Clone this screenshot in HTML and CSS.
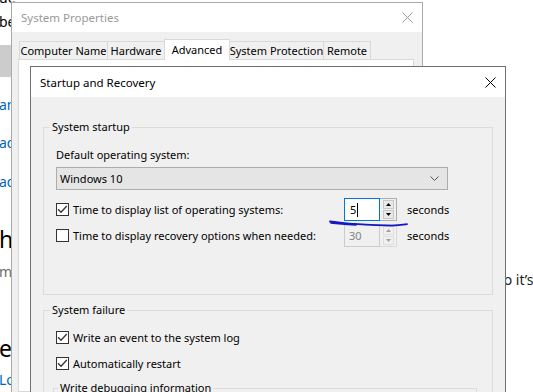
FILE: index.html
```html
<!DOCTYPE html>
<html lang="en">
<head>
<meta charset="utf-8">
<title>Startup and Recovery</title>
<link rel="stylesheet" href="styles.css">
</head>
<body>
<div class="settings">
  <div class="settings-left">
    <div class="frag frag-top">ue</div>
    <div class="frag frag-body">be</div>
    <div class="frag-btn"></div>
    <div class="frag link l1">an</div>
    <div class="frag link l2">ad</div>
    <div class="frag link l3">ad</div>
    <div class="frag heading h1">his</div>
    <div class="frag sub">me</div>
    <div class="frag heading h2">ela</div>
    <div class="frag link l4">Lo</div>
  </div>
  <div class="settings-right">
    <div class="frag r1">so it’s</div>
  </div>
</div>

<div class="win sysprops">
  <div class="titlebar">
    <span class="title title-inactive">System Properties</span>
    <svg class="close close-inactive" width="11" height="11" viewBox="0 0 11 11"><path d="M0.5 0.5 L10.5 10.5 M10.5 0.5 L0.5 10.5"/></svg>
  </div>
  <div class="sp-body">
    <div class="tabs">
      <div class="tab tab-cn">Computer Name</div>
      <div class="tab tab-hw">Hardware</div>
      <div class="tab tab-adv selected">Advanced</div>
      <div class="tab tab-sp">System Protection</div>
      <div class="tab tab-rm">Remote</div>
    </div>
    <div class="tab-panel"></div>
  </div>
</div>

<div class="win startup">
  <div class="titlebar">
    <span class="title">Startup and Recovery</span>
    <svg class="close" width="11" height="11" viewBox="0 0 11 11"><path d="M0.5 0.5 L10.5 10.5 M10.5 0.5 L0.5 10.5"/></svg>
  </div>
  <div class="dlg-body">
    <div class="group group-startup">
      <div class="group-label">System startup</div>
      <div class="field-label">Default operating system:</div>
      <div class="combo">
        <span>Windows 10</span>
        <svg class="chev" width="9" height="5" viewBox="0 0 9 5"><path d="M0.5 0.5 L4.5 4.5 L8.5 0.5"/></svg>
      </div>
      <div class="spin-row row-1">
        <div class="check-line">
          <span class="cb"><svg width="11" height="11" viewBox="0 0 11 11"><path d="M1 5.2 L4 8.2 L9.8 2"/></svg></span>
          <span>Time to display list of operating systems:</span>
        </div>
        <div class="spinner">
          <div class="edit focused"><span class="caret">5</span></div>
          <div class="updown">
            <span class="btn"><svg width="5" height="3" viewBox="0 0 5 3"><path d="M2.5 0 L5 3 L0 3 Z"/></svg></span>
            <span class="btn"><svg width="5" height="3" viewBox="0 0 5 3"><path d="M0 0 L5 0 L2.5 3 Z"/></svg></span>
          </div>
        </div>
        <span class="unit">seconds</span>
      </div>
      <div class="spin-row row-2">
        <div class="check-line">
          <span class="cb"></span>
          <span>Time to display recovery options when needed:</span>
        </div>
        <div class="spinner disabled">
          <div class="edit">30</div>
          <div class="updown">
            <span class="btn"><svg width="5" height="3" viewBox="0 0 5 3"><path d="M2.5 0 L5 3 L0 3 Z"/></svg></span>
            <span class="btn"><svg width="5" height="3" viewBox="0 0 5 3"><path d="M0 0 L5 0 L2.5 3 Z"/></svg></span>
          </div>
        </div>
        <span class="unit">seconds</span>
      </div>
    </div>

    <div class="group group-failure">
      <div class="group-label">System failure</div>
      <div class="check-line fail-1">
        <span class="cb"><svg width="11" height="11" viewBox="0 0 11 11"><path d="M1 5.2 L4 8.2 L9.8 2"/></svg></span>
        <span>Write an event to the system log</span>
      </div>
      <div class="check-line fail-2">
        <span class="cb"><svg width="11" height="11" viewBox="0 0 11 11"><path d="M1 5.2 L4 8.2 L9.8 2"/></svg></span>
        <span>Automatically restart</span>
      </div>
      <div class="group inner-group">
        <div class="group-label">Write debugging information</div>
      </div>
    </div>
  </div>
</div>

<svg class="scribble" width="533" height="392" viewBox="0 0 533 392">
  <path d="M330 221.5 C338 222 344 223.5 352 223.8 C364 224.6 378 225.6 392 225.6 C399 225.5 404 224.6 407 224.2"/>
  <path d="M331 222.8 C339 223.6 346 224.6 356 224.8"/>
</svg>
</body>
</html>
```

FILE: styles.css
```css
* { box-sizing: border-box; }
html, body { margin: 0; padding: 0; }
body {
  width: 533px;
  height: 392px;
  overflow: hidden;
  position: relative;
  background: #ffffff;
  font-family: "Noto Sans", "Open Sans", sans-serif;
}

/* Background settings page */
.settings {
  display: grid;
  grid-template-columns: 497px 1fr;
  height: 392px;
  overflow: hidden;
  font-size: 14px;
  line-height: 20px;
  color: #000;
}
.settings-left { display: flex; flex-direction: column; align-items: flex-start; }
.frag { height: 20px; white-space: nowrap; margin-left: -1px; }
.frag-top { margin-top: -12px; }
.frag-body { margin-top: 4px; }
.frag-btn { width: 40px; height: 32px; background: #cccccc; margin-top: 13px; flex: none; }
.link { color: #0067b8; }
.l1 { margin-top: 18px; }
.l2 { margin-top: 18px; }
.l3 { margin-top: 19px; }
.heading { font-size: 23px; height: 30px; line-height: 30px; }
.h1 { margin-top: 32px; }
.sub { color: #6b6b6b; margin-top: 8px; }
.h2 { margin-top: 51px; }
.l4 { margin-top: 7px; }
.settings-right { display: flex; flex-direction: column; }
.r1 { margin-top: 270px; color: #222; margin-left: 0; }

/* Windows */
.win {
  position: absolute;
  display: flex;
  flex-direction: column;
  border: 1px solid #777;
  font-size: 11px;
  color: #000;
}
.titlebar {
  background: #fff;
  display: flex;
  align-items: center;
  justify-content: space-between;
  padding: 0 9px;
  font-size: 11.5px;
  flex: none;
}
.title-inactive { color: #999; }
.close path { stroke: #000; stroke-width: 1; fill: none; }
.close-inactive path { stroke: #999; }

.sysprops {
  left: 11px;
  top: 2px;
  width: 412px;
  height: 391px;
  border-color: #aaaaaa;
}
.sysprops .titlebar { height: 29px; }
.sp-body {
  flex: 1;
  background: #f0f0f0;
  padding: 7px 8px 0 6px;
  display: flex;
  flex-direction: column;
}
.tabs {
  display: flex;
  align-items: flex-end;
  height: 20px;
  padding-left: 1px;
}
.tab {
  height: 18px;
  border: 1px solid #d9d9d9;
  border-bottom: none;
  background: #f0f0f0;
  display: flex;
  align-items: center;
  justify-content: center;
  white-space: nowrap;
  margin-left: -1px;
}
.tab:first-child { margin-left: 0; }
.tab-cn { width: 89px; }
.tab-hw { width: 58px; }
.tab-adv { width: 66px; }
.tab-sp { width: 95px; }
.tab-rm { width: 48px; }
.tab.selected {
  height: 21px;
  margin-bottom: -1px;
  background: #fff;
  position: relative;
  z-index: 1;
  padding-bottom: 2px;
}
.tab-panel {
  flex: 1;
  background: #fff;
  border: 1px solid #d9d9d9;
}

.startup {
  left: 30px;
  top: 66px;
  width: 476px;
  height: 327px;
  border-color: #707070;
}
.startup .titlebar { height: 30px; }
.dlg-body {
  flex: 1;
  background: #f0f0f0;
  padding: 30px 12px 0 12px;
  display: flex;
  flex-direction: column;
  overflow: hidden;
}

.group {
  border: 1px solid #dcdcdc;
  padding: 0 12px;
  display: flex;
  flex-direction: column;
  align-items: stretch;
}
.group-label {
  align-self: flex-start;
  margin: -9px 0 0 -6px;
  padding: 0 2px;
  background: #f0f0f0;
  line-height: 16px;
  height: 16px;
  flex: none;
}
.group-startup { padding-bottom: 47px; flex: none; }
.field-label { margin-top: 12px; line-height: 16px; height: 16px; }
.combo {
  margin-top: 4px;
  height: 23px;
  width: 392px;
  background: #e5e5e5;
  border: 1px solid #adadad;
  display: flex;
  align-items: center;
  justify-content: space-between;
  padding: 0 8px 0 3px;
}
.chev path { stroke: #555; stroke-width: 1; fill: none; }

.spin-row {
  display: flex;
  align-items: center;
  height: 23px;
}
.row-1 { margin-top: 8px; }
.row-2 { margin-top: 3px; }
.check-line {
  display: flex;
  align-items: center;
  gap: 4px;
  white-space: nowrap;
  height: 16px;
  flex: none;
}
.spin-row .check-line { width: 288px; }
.cb {
  width: 13px;
  height: 13px;
  border: 1px solid #333;
  background: #fff;
  flex: none;
  display: flex;
}
.cb path { stroke: #333; stroke-width: 1.3; fill: none; }

.spinner {
  display: flex;
  height: 23px;
  width: 53px;
  flex: none;
}
.edit {
  width: 36px;
  height: 23px;
  border: 1px solid #7a7a7a;
  background: #fff;
  display: flex;
  align-items: center;
  padding-left: 5px;
}
.edit.focused { border-color: #0078d7; }
.caret { border-right: 1px solid #000; padding-right: 1px; line-height: 14px; }
.updown {
  width: 17px;
  height: 23px;
  border: 1px solid #adadad;
  border-left: none;
  background: #f0f0f0;
  display: flex;
  flex-direction: column;
  justify-content: space-between;
  align-items: center;
  padding: 1px 0;
}
.btn {
  width: 11px;
  height: 9px;
  border: 1px solid #c7c7c7;
  background: #e9e9e9;
  display: flex;
  align-items: center;
  justify-content: center;
}
.btn path { fill: #000; }
.spinner.disabled .edit { border-color: #cccccc; background: #f0f0f0; color: #838383; padding-left: 4px; }
.spinner.disabled .updown { border-color: #d9d9d9; }
.spinner.disabled .btn { border-color: #dedede; background: #f0f0f0; }
.spinner.disabled .btn path { fill: #a0a0a0; }
.unit { margin-left: 10px; white-space: nowrap; }

.group-failure { margin-top: 15px; flex: 1; }
.fail-1 { margin-top: 11px; }
.fail-2 { margin-top: 10px; }
.inner-group {
  margin: 17px 3px 0 -3px;
  padding: 0;
  flex: 1;
  border-bottom: none;
}
.inner-group .group-label { margin-left: 4px; }

.scribble {
  position: absolute;
  left: 0;
  top: 0;
  pointer-events: none;
}
.scribble path { stroke: #1515c8; stroke-width: 1.8; fill: none; stroke-linecap: round; }
```
